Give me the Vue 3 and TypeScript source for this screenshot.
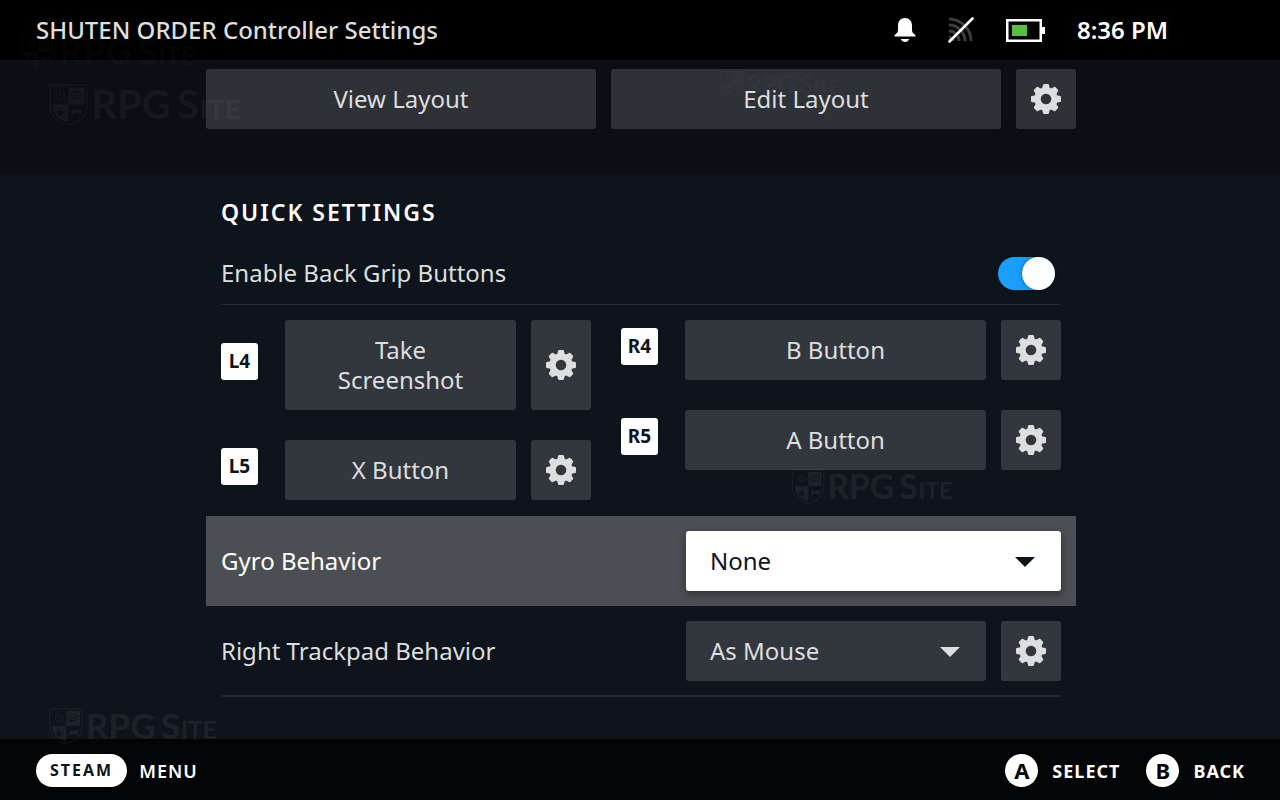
<script setup lang="ts">
import { ref } from 'vue'

interface Binding {
  id: string
  action: string
}

interface Mark {
  id: string
  tone: string
}

const leftGrips: Binding[] = [
  { id: 'L4', action: 'Take Screenshot' },
  { id: 'L5', action: 'X Button' },
]
const rightGrips: Binding[] = [
  { id: 'R4', action: 'B Button' },
  { id: 'R5', action: 'A Button' },
]
const gripSides = [
  { name: 'left', items: leftGrips },
  { name: 'right', items: rightGrips },
]
const marks: Mark[] = [
  { id: 'title', tone: 'faint' },
  { id: 'view', tone: 'soft' },
  { id: 'edit', tone: 'faint' },
  { id: 'grips', tone: 'clear' },
  { id: 'footer', tone: 'clear' },
]
const teeth = [0, 45, 90, 135, 180, 225, 270, 315]

const backGrips = ref(true)
const gyro = ref('None')
const trackpad = ref('As Mouse')
</script>

<template>
  <div class="screen">
    <svg class="defs" aria-hidden="true">
      <symbol id="gear" viewBox="-15 -15 30 30">
        <circle r="8.4" fill="none" stroke="currentColor" stroke-width="6.2" />
        <path
          v-for="angle in teeth"
          :key="angle"
          :transform="`rotate(${angle})`"
          d="M-4.6-9.5L-3.6-11.6L-2.9-14.2Q-2.7-15-1.9-15H1.9Q2.7-15 2.9-14.2L3.6-11.6L4.6-9.5Z"
          fill="currentColor"
        />
      </symbol>
    </svg>

    <header class="titlebar">
      <h1>SHUTEN ORDER Controller Settings</h1>
      <div class="status">
        <svg class="bell" width="22" height="25" viewBox="0 0 22 25" aria-label="Notifications">
          <path d="M11 0C6.500 0 4 3.300 4 7.500V12C4 14.500 2.500 15.500 .5 17.200V18.500H21.500V17.200C19.500 15.500 18 14.500 18 12V7.500C18 3.300 15.500 0 11 0ZM6.800 21H15.200C14.400 22.900 13 24 11 24S7.600 22.900 6.800 21Z" fill="#fff" />
        </svg>
        <svg class="wifi" width="26" height="26" viewBox="0 0 26 26" aria-label="Wireless off">
          <path d="M1 2A22 22 0 0 1 23 24M1 8A16 16 0 0 1 17 24M1 14A10 10 0 0 1 11 24" fill="none" stroke="#3c3c3c" stroke-width="3" />
          <path d="M1 19A5 5 0 0 1 6 24H1Z" fill="#3c3c3c" />
          <path d="M1.500 24.500L24.500 1.500" stroke="#fff" stroke-width="2.600" stroke-linecap="round" />
        </svg>
        <svg class="battery" width="39" height="23" viewBox="0 0 39 23" aria-label="Battery">
          <rect x="1.250" y="1.250" width="33.500" height="20.500" fill="none" stroke="#fff" stroke-width="2.500" />
          <rect x="36" y="8" width="3" height="7" fill="#fff" />
          <rect x="6" y="6" width="15" height="11" fill="#59bf40" />
        </svg>
        <time>8:36 PM</time>
      </div>
    </header>

    <main>
      <section class="layout-band">
        <div class="column layout-row">
          <button type="button" class="btn">View Layout</button>
          <button type="button" class="btn">Edit Layout</button>
          <button type="button" class="btn gear" aria-label="Layout options">
            <svg width="30" height="30"><use href="#gear" /></svg>
          </button>
        </div>
      </section>

      <section class="column quick">
        <h2>QUICK SETTINGS</h2>
        <div class="row toggle-row">
          <label for="back-grips">Enable Back Grip Buttons</label>
          <input id="back-grips" v-model="backGrips" type="checkbox" role="switch" class="toggle" />
        </div>

        <div class="grips">
          <div v-for="side in gripSides" :key="side.name" class="side">
            <div v-for="grip in side.items" :key="grip.id" class="grip">
              <span class="badge">{{ grip.id }}</span>
              <button type="button" class="btn">{{ grip.action }}</button>
              <button type="button" class="btn gear" :aria-label="`${grip.id} options`">
                <svg width="30" height="30"><use href="#gear" /></svg>
              </button>
            </div>
          </div>
        </div>

        <div class="row focused">
          <label for="gyro">Gyro Behavior</label>
          <div class="field">
            <div class="picker">
              <select id="gyro" v-model="gyro">
                <option>None</option>
                <option>As Mouse</option>
                <option>As Joystick</option>
              </select>
              <svg width="20" height="10" viewBox="0 0 20 10" aria-hidden="true"><path d="M0 0H20L10 10Z" fill="currentColor" /></svg>
            </div>
          </div>
        </div>

        <div class="row trackpad">
          <label for="trackpad">Right Trackpad Behavior</label>
          <div class="field">
            <div class="picker">
              <select id="trackpad" v-model="trackpad">
                <option>As Mouse</option>
                <option>As Joystick</option>
                <option>None</option>
              </select>
              <svg width="20" height="10" viewBox="0 0 20 10" aria-hidden="true"><path d="M0 0H20L10 10Z" fill="currentColor" /></svg>
            </div>
            <button type="button" class="btn gear" aria-label="Trackpad options">
              <svg width="30" height="30"><use href="#gear" /></svg>
            </button>
          </div>
        </div>
      </section>
    </main>

    <footer>
      <button type="button" class="hint"><span class="pill">STEAM</span>MENU</button>
      <div class="actions">
        <button type="button" class="hint"><span class="face">A</span>SELECT</button>
        <button type="button" class="hint"><span class="face">B</span>BACK</button>
      </div>
    </footer>

    <svg v-for="mark in marks" :key="mark.id" class="mark" :class="[`mark-${mark.id}`, mark.tone]" viewBox="0 0 168 37">
      <path d="M.8.8H33.2V19C33.2 28.5 26 34 17 36C8 34 .8 28.5.8 19Z" fill="none" stroke="#fff" stroke-width="1" />
      <path d="M17 3H31V18H17ZM3 18H17V33.5C9 31.500 3 27 3 18ZM10 21L8.800 24H5.500L8.200 26L7.200 29L10 27.200L12.800 29L11.800 26L14.500 24H11.200Z" fill="#fff" fill-rule="evenodd" />
      <path d="M7.500 7.500A3.600 3.600 0 1 0 12.500 7.500M10 5.500V10" fill="none" stroke="#fff" stroke-width="1" />
      <path d="M19.500 28C19.500 22 21.500 22 23.500 23.500L26 22.500C28 21.500 29.500 22 29 28L26 25.500L22.500 26Z" fill="#fff" />
      <ellipse cx="24" cy="9.500" rx="4.500" ry="3" fill="none" stroke="#0e141b" stroke-width="1" />
      <path d="M22 9.500H26M22 12L21 14.500" fill="none" stroke="#0e141b" stroke-width="1" />
      <text y="31" class="mark-text"><tspan x="37">RPG</tspan><tspan x="112">S</tspan><tspan x="132" class="mark-small">ITE</tspan></text>
    </svg>
  </div>
</template>

<style>
body {
  background: #0e141b;
}
</style>

<style scoped>
.screen {
  position: relative;
  display: flex;
  flex-direction: column;
  min-height: 100vh;
  background: #0e141b;
  color: #dcdedf;
  font: 24px/30px 'Noto Sans', 'Open Sans', sans-serif;
}
.screen *,
.screen *::before {
  box-sizing: border-box;
}
.defs {
  position: absolute;
  width: 0;
  height: 0;
}
button,
select {
  border: 0;
  margin: 0;
  font: inherit;
  color: inherit;
}
.titlebar {
  display: flex;
  align-items: center;
  justify-content: space-between;
  height: 60px;
  padding: 0 107px 0 36px;
  background: #000;
}
h1 {
  margin: 0;
  font-size: 24px;
  font-weight: 500;
}
.status {
  display: flex;
  align-items: center;
  gap: 32px;
  color: #fff;
  font-weight: 600;
}
.status time {
  min-width: 96px;
}
.layout-band {
  padding: 9px 0 45px;
  background: #0b0e13;
}
.column {
  width: calc(100% - 40px);
  max-width: 870px;
  margin: 0 auto;
  position: relative;
  left: 1px;
}
.layout-row {
  display: flex;
  gap: 15px;
}
.btn {
  flex: 1;
  min-height: 60px;
  padding: 15px 30px;
  border-radius: 3px;
  background: #32363d;
  text-align: center;
}
.layout-row .btn {
  background: #2e3136;
}
.btn.gear {
  display: flex;
  align-items: center;
  justify-content: center;
  flex: 0 0 60px;
  padding: 0;
}
h2 {
  margin: 0;
  padding: 23px 15px 15px;
  color: #fff;
  font-size: 23px;
  font-weight: 600;
  letter-spacing: 2px;
}
.row {
  display: flex;
  align-items: center;
  justify-content: space-between;
}
.toggle-row {
  height: 63px;
  margin: 0 15px;
  padding-right: 6px;
  border-bottom: 1px solid #262c32;
}
.toggle {
  appearance: none;
  width: 57px;
  height: 33px;
  margin: 0;
  border-radius: 17px;
  background: #3d4450;
}
.toggle::before {
  content: '';
  display: block;
  width: 33px;
  height: 33px;
  border-radius: 50%;
  background: #fff;
  box-shadow: 0 0 5px rgba(0, 0, 0, 0.4);
}
.toggle:checked {
  background: #1a9fff;
}
.toggle:checked::before {
  margin-left: auto;
}
.grips {
  display: grid;
  grid-template-columns: 370fr 440fr;
  gap: 30px;
  padding: 15px 15px 16px;
}
.side {
  display: flex;
  flex-direction: column;
  gap: 30px;
}
.grip {
  display: flex;
  gap: 15px;
}
.badge {
  align-self: center;
  min-width: 37px;
  margin: 0 12px 7px 0;
  border-radius: 3px;
  background: #fff;
  color: #0e141b;
  font-size: 19px;
  font-weight: 700;
  line-height: 37px;
  text-align: center;
}
.focused {
  height: 90px;
  padding: 0 15px;
  background: #4b4f53;
  color: #fff;
}
.trackpad {
  height: 91px;
  margin: 0 15px;
  border-bottom: 2px solid #20262d;
}
.field {
  display: flex;
  gap: 15px;
  width: 375px;
}
.picker {
  position: relative;
  flex: 1;
}
.picker svg {
  position: absolute;
  top: 26px;
  right: 26px;
  pointer-events: none;
}
select {
  appearance: none;
  display: block;
  width: 100%;
  height: 60px;
  padding: 0 60px 0 24px;
  border-radius: 3px;
  background: #32363d;
}
.focused .picker {
  color: #0e141b;
}
.focused select {
  background: #fff;
  box-shadow: 0 3px 8px rgba(0, 0, 0, 0.4);
}
footer {
  display: flex;
  align-items: center;
  justify-content: space-between;
  height: 61px;
  margin-top: auto;
  padding: 2px 35px 0 36px;
  background: #030406;
}
.actions {
  display: flex;
  gap: 26px;
}
.hint {
  display: flex;
  align-items: center;
  gap: 12px;
  padding: 0;
  background: none;
  color: #fff;
  font-size: 18px;
  font-weight: 600;
  letter-spacing: 1px;
}
.actions .hint {
  gap: 14px;
  font-weight: 700;
}
.pill {
  padding: 0 14px;
  border-radius: 17px;
  background: #fff;
  color: #0e141b;
  font-size: 16px;
  font-weight: 700;
  line-height: 33px;
  letter-spacing: 2px;
}
.face {
  width: 33px;
  border-radius: 50%;
  background: #fff;
  color: #030406;
  font-size: 22px;
  font-weight: 700;
  line-height: 33px;
  letter-spacing: 0;
}
.mark {
  position: absolute;
  overflow: visible;
  pointer-events: none;
}
.mark-text {
  fill: #fff;
  font-family: Lato, sans-serif;
  font-size: 35px;
  font-weight: 700;
}
.mark-small {
  font-size: 24px;
}
.faint {
  opacity: 0.02;
}
.soft {
  opacity: 0.04;
}
.clear {
  opacity: 0.06;
}
.mark-title {
  top: 33px;
  left: 21px;
  width: 175px;
}
.mark-view {
  top: 84px;
  left: 49px;
  width: 192px;
}
.mark-edit {
  top: 71px;
  left: 720px;
  width: 119px;
}
.mark-grips {
  top: 469px;
  left: 792px;
  width: 161px;
}
.mark-footer {
  top: 708px;
  left: 49px;
  width: 168px;
}
</style>
